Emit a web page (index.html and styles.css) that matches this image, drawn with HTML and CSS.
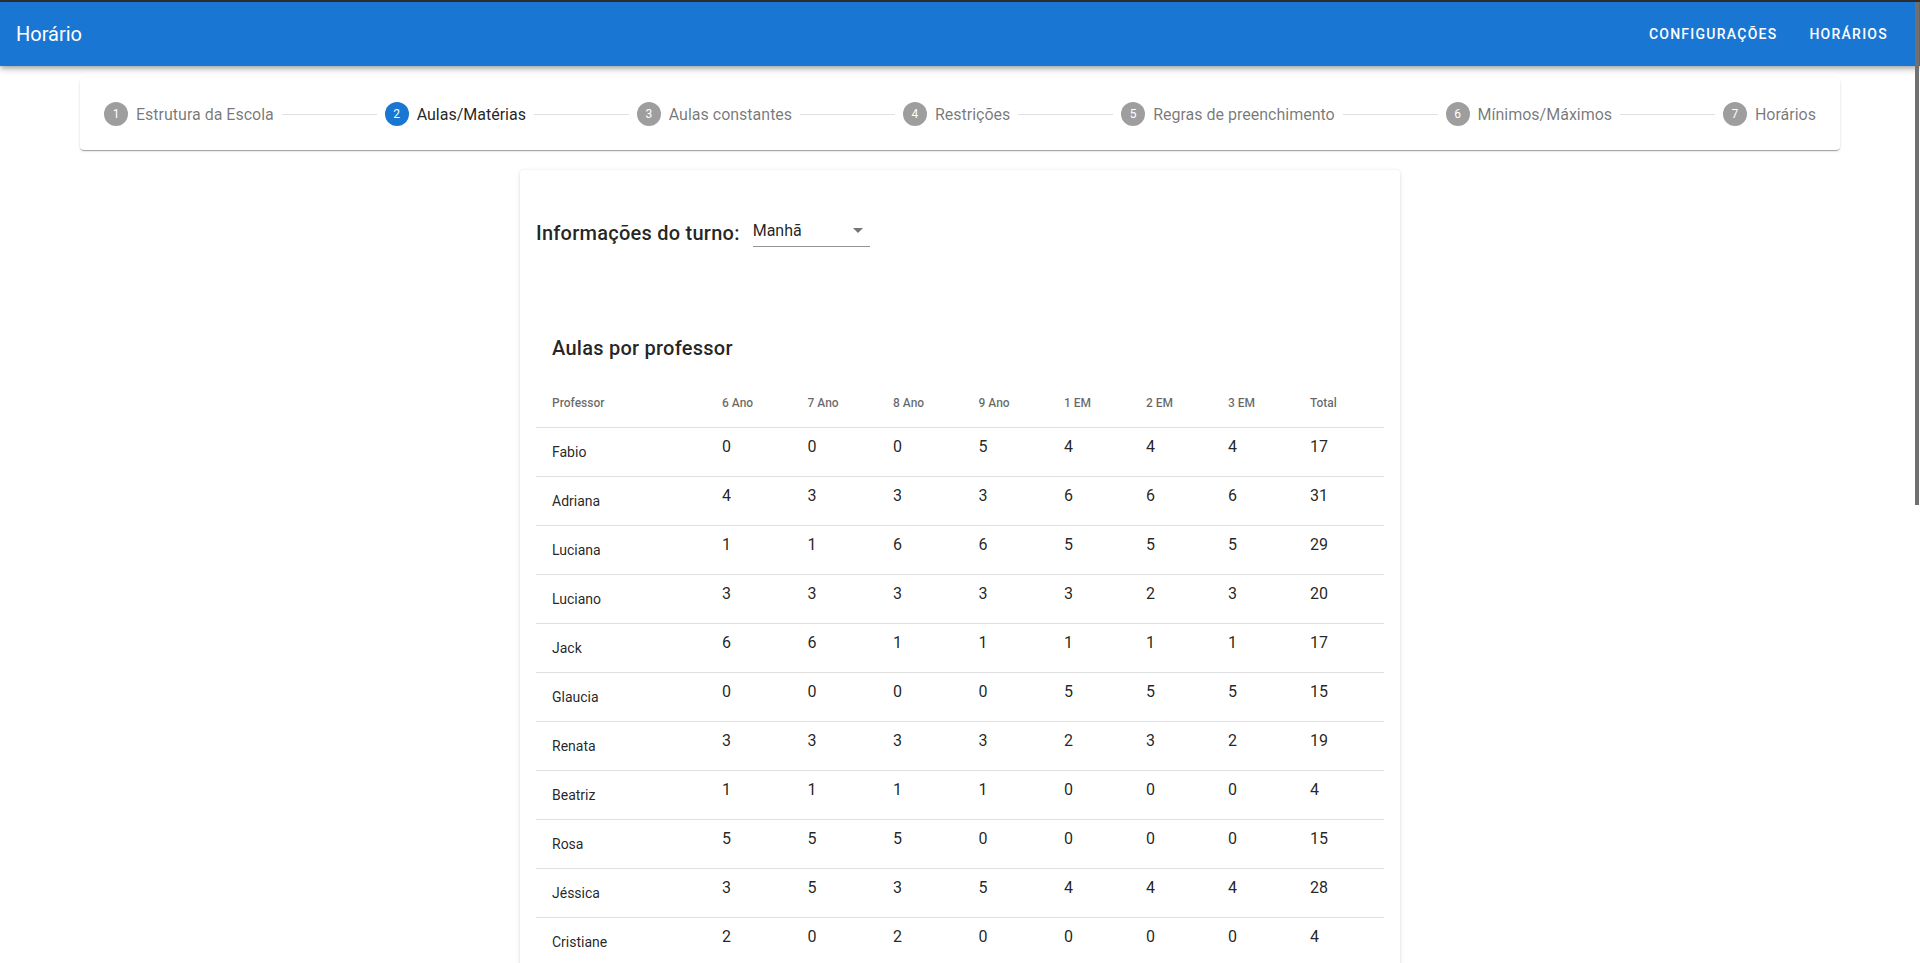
FILE: index.html
```html
<!DOCTYPE html>
<html lang="pt-BR">
<head>
<meta charset="utf-8">
<title>Horário</title>
<link rel="stylesheet" href="styles.css">
</head>
<body>
<div class="frame-top"></div>
<header class="toolbar">
  <span class="title">Horário</span>
  <span class="spacer"></span>
  <nav class="nav">
    <a class="nav-btn">CONFIGURAÇÕES</a>
    <a class="nav-btn">HORÁRIOS</a>
  </nav>
</header>
<main class="content">
  <div class="stepper">
    <div class="step"><span class="step-icon">1</span><span class="step-label">Estrutura da Escola</span></div>
    <div class="step-line"></div>
    <div class="step"><span class="step-icon active">2</span><span class="step-label active">Aulas/Matérias</span></div>
    <div class="step-line"></div>
    <div class="step"><span class="step-icon">3</span><span class="step-label">Aulas constantes</span></div>
    <div class="step-line"></div>
    <div class="step"><span class="step-icon">4</span><span class="step-label">Restrições</span></div>
    <div class="step-line"></div>
    <div class="step"><span class="step-icon">5</span><span class="step-label">Regras de preenchimento</span></div>
    <div class="step-line"></div>
    <div class="step"><span class="step-icon">6</span><span class="step-label">Mínimos/Máximos</span></div>
    <div class="step-line"></div>
    <div class="step"><span class="step-icon">7</span><span class="step-label">Horários</span></div>
  </div>

  <section class="panel">
    <div class="turno">
      <span class="turno-label">Informações do turno:</span>
      <div class="select"><span class="select-value">Manhã</span><span class="arrow"></span></div>
    </div>

    <h2 class="table-title">Aulas por professor</h2>

    <div class="table">
      <div class="row head">
        <div class="cell">Professor</div><div class="cell">6 Ano</div><div class="cell">7 Ano</div><div class="cell">8 Ano</div><div class="cell">9 Ano</div><div class="cell">1 EM</div><div class="cell">2 EM</div><div class="cell">3 EM</div><div class="cell">Total</div>
      </div>
      <div class="row"><div class="cell name">Fabio</div><div class="cell num">0</div><div class="cell num">0</div><div class="cell num">0</div><div class="cell num">5</div><div class="cell num">4</div><div class="cell num">4</div><div class="cell num">4</div><div class="cell num">17</div></div>
      <div class="row"><div class="cell name">Adriana</div><div class="cell num">4</div><div class="cell num">3</div><div class="cell num">3</div><div class="cell num">3</div><div class="cell num">6</div><div class="cell num">6</div><div class="cell num">6</div><div class="cell num">31</div></div>
      <div class="row"><div class="cell name">Luciana</div><div class="cell num">1</div><div class="cell num">1</div><div class="cell num">6</div><div class="cell num">6</div><div class="cell num">5</div><div class="cell num">5</div><div class="cell num">5</div><div class="cell num">29</div></div>
      <div class="row"><div class="cell name">Luciano</div><div class="cell num">3</div><div class="cell num">3</div><div class="cell num">3</div><div class="cell num">3</div><div class="cell num">3</div><div class="cell num">2</div><div class="cell num">3</div><div class="cell num">20</div></div>
      <div class="row"><div class="cell name">Jack</div><div class="cell num">6</div><div class="cell num">6</div><div class="cell num">1</div><div class="cell num">1</div><div class="cell num">1</div><div class="cell num">1</div><div class="cell num">1</div><div class="cell num">17</div></div>
      <div class="row"><div class="cell name">Glaucia</div><div class="cell num">0</div><div class="cell num">0</div><div class="cell num">0</div><div class="cell num">0</div><div class="cell num">5</div><div class="cell num">5</div><div class="cell num">5</div><div class="cell num">15</div></div>
      <div class="row"><div class="cell name">Renata</div><div class="cell num">3</div><div class="cell num">3</div><div class="cell num">3</div><div class="cell num">3</div><div class="cell num">2</div><div class="cell num">3</div><div class="cell num">2</div><div class="cell num">19</div></div>
      <div class="row"><div class="cell name">Beatriz</div><div class="cell num">1</div><div class="cell num">1</div><div class="cell num">1</div><div class="cell num">1</div><div class="cell num">0</div><div class="cell num">0</div><div class="cell num">0</div><div class="cell num">4</div></div>
      <div class="row"><div class="cell name">Rosa</div><div class="cell num">5</div><div class="cell num">5</div><div class="cell num">5</div><div class="cell num">0</div><div class="cell num">0</div><div class="cell num">0</div><div class="cell num">0</div><div class="cell num">15</div></div>
      <div class="row"><div class="cell name">Jéssica</div><div class="cell num">3</div><div class="cell num">5</div><div class="cell num">3</div><div class="cell num">5</div><div class="cell num">4</div><div class="cell num">4</div><div class="cell num">4</div><div class="cell num">28</div></div>
      <div class="row"><div class="cell name">Cristiane</div><div class="cell num">2</div><div class="cell num">0</div><div class="cell num">2</div><div class="cell num">0</div><div class="cell num">0</div><div class="cell num">0</div><div class="cell num">0</div><div class="cell num">4</div></div>
    </div>
  </section>
</main>
<div class="scrollbar"></div>
</body>
</html>
```

FILE: styles.css
```css
html, body {
  margin: 0;
  height: 100%;
  overflow: hidden;
}

body {
  font-family: Roboto, "Helvetica Neue", Arial, sans-serif;
  background: #ffffff;
  color: rgba(0, 0, 0, 0.87);
}

.frame-top {
  height: 2px;
  background: #2f2f2f;
}

.toolbar {
  position: relative;
  z-index: 2;
  height: 64px;
  display: flex;
  align-items: center;
  padding: 0 16px;
  background: #1976d2;
  color: #ffffff;
  box-shadow: 0 2px 4px -1px rgba(0, 0, 0, 0.2), 0 4px 5px 0 rgba(0, 0, 0, 0.14), 0 1px 10px 0 rgba(0, 0, 0, 0.12);
}

.title {
  font-size: 20px;
  font-weight: 400;
}

.spacer {
  flex: 1 1 auto;
}

.nav {
  display: flex;
}

.nav-btn {
  font-size: 14px;
  font-weight: 500;
  letter-spacing: 1.25px;
  line-height: 36px;
  padding: 0 16px;
  cursor: pointer;
}

.content {
  padding: 12px 80px 0;
}

.stepper {
  display: flex;
  align-items: center;
  height: 72px;
  background: #ffffff;
  border-radius: 4px;
  box-shadow: 0 2px 1px -1px rgba(0, 0, 0, 0.2), 0 1px 1px 0 rgba(0, 0, 0, 0.14), 0 1px 3px 0 rgba(0, 0, 0, 0.12);
}

.step {
  display: flex;
  align-items: center;
  height: 72px;
  padding: 0 24px;
  flex: none;
}

.step-icon {
  width: 24px;
  height: 24px;
  border-radius: 50%;
  margin-right: 8px;
  display: flex;
  align-items: center;
  justify-content: center;
  background: rgba(0, 0, 0, 0.38);
  color: #ffffff;
  font-size: 12px;
}

.step-icon.active {
  background: #1976d2;
}

.step-label {
  font-size: 16px;
  color: rgba(0, 0, 0, 0.54);
  white-space: nowrap;
}

.step-label.active {
  color: rgba(0, 0, 0, 0.87);
}

.step-line {
  flex: auto;
  min-width: 32px;
  margin: 0 -16px;
  border-top: 1px solid rgba(0, 0, 0, 0.12);
}

.panel {
  width: 880px;
  box-sizing: border-box;
  margin: 20px auto 0;
  padding: 16px;
  background: #ffffff;
  border-radius: 4px;
  box-shadow: 0 1px 3px 0 rgba(0, 0, 0, 0.12), 0 1px 6px 0 rgba(0, 0, 0, 0.06);
}

.turno {
  display: flex;
  align-items: flex-start;
  margin-top: 31px;
}

.turno-label {
  font-size: 20px;
  font-weight: 500;
  letter-spacing: 0.25px;
  line-height: 32px;
  margin-right: 13px;
}

.select {
  width: 117px;
  height: 29px;
  display: flex;
  justify-content: space-between;
  align-items: flex-start;
  border-bottom: 1px solid rgba(0, 0, 0, 0.42);
  font-size: 16px;
  line-height: 27px;
}

.arrow {
  width: 0;
  height: 0;
  margin: 11px 7px 0 0;
  border-left: 5px solid transparent;
  border-right: 5px solid transparent;
  border-top: 5px solid rgba(0, 0, 0, 0.54);
}

.table-title {
  margin: 83px 0 0 16px;
  font-size: 20px;
  font-weight: 500;
  letter-spacing: 0.25px;
  line-height: 32px;
}

.table {
  margin-top: 15px;
}

.row {
  display: grid;
  grid-template-columns: 186px repeat(4, 85.5px) repeat(3, 82px) 1fr;
  align-items: center;
  height: 48px;
  border-bottom: 1px solid rgba(0, 0, 0, 0.12);
}

.cell:first-child {
  padding-left: 16px;
}

.head .cell {
  font-size: 12px;
  font-weight: 500;
  color: rgba(0, 0, 0, 0.6);
}

.name {
  font-size: 14px;
}

.num {
  font-size: 16px;
  padding-bottom: 11px;
}

.scrollbar {
  position: fixed;
  top: 2px;
  right: 1px;
  width: 4px;
  height: 503px;
  background: #707070;
  z-index: 10;
}
```
